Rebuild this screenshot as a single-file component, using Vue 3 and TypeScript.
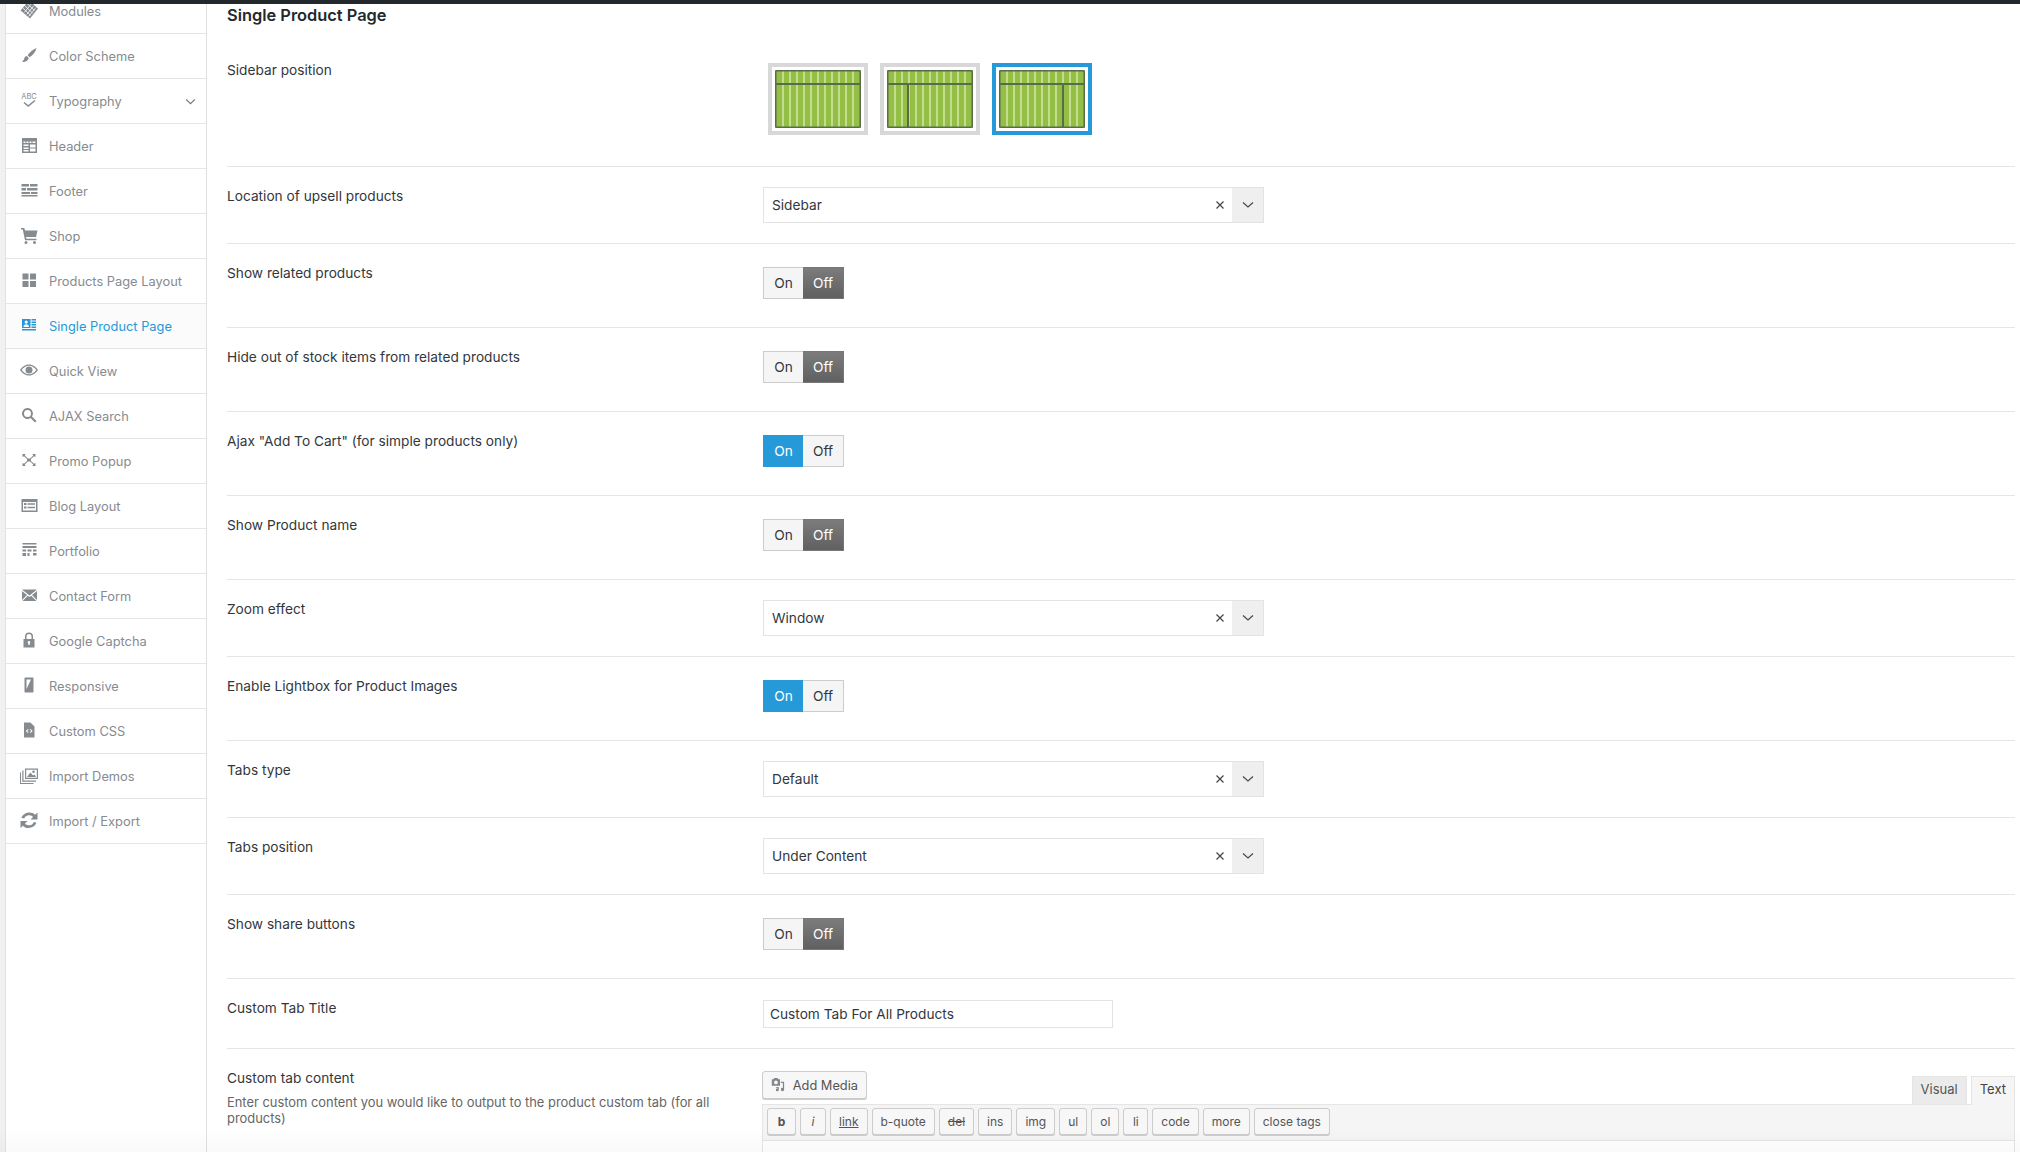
<script setup lang="ts">
interface NavItem {
  label: string;
  fill: string;
  line?: string;
  caret?: boolean;
  active?: boolean;
}

type Row =
  | { kind: "select"; label: string; value: string }
  | { kind: "toggle"; label: string; on: boolean };

const nav: NavItem[] = [
  { label: "Modules", fill: "M10 0.500 19 8.500 11 18.500 1.500 10.500Z", line: "M7.500 3 15.500 10.500M5.500 5.500 13.500 13M3.800 8l8 7.500M12.500 3.500 5.200 12.500M15 5.500l-7.300 9M17 7.500 9.700 16.500" },
  { label: "Color Scheme", fill: "M17.500 3C14.500 4.200 10.800 7 8.600 10.200l2 2C14 10.200 16.700 6.500 17.500 3ZM7.700 11C5.500 11.300 5.500 13 5 14.500L3 16.800C5.800 17.300 9 16 9.800 13Z" },
  { label: "Typography", fill: "", line: "M5 12.500 9.200 16 16 10.500", caret: true },
  { label: "Header", fill: "M3 3h15v15H3ZM4.500 6.500V8h2V6.500ZM7.500 6.500V8h2V6.500ZM10.500 6.500V8h2V6.500ZM13.500 6.500V8h3V6.500ZM4.500 9.500V11h5V9.500ZM4.500 12.500V14h5v-1.500ZM4.500 15v1.500h5V15ZM11 9.500v3h5.500v-3ZM11 13.500v3h5.500v-3Z" },
  { label: "Footer", fill: "M2.500 4H10v2.500H2.500ZM11 4h7.500v2.500H11ZM2.500 8H7v2.500H2.500ZM8 8h10.500v2.500H8ZM2.500 12H11v2H2.500ZM12 12h6.500v2H12ZM2.500 15h16v1.500h-16Z" },
  { label: "Shop", fill: "M2 3h3.300L6 5.500h12.500L17 12H7l.5 1.700h10v1.500H6L3.800 4.500H2ZM7 16a1.500 1.500 0 1 1 0 3 1.500 1.500 0 0 1 0-3ZM15.500 16a1.500 1.500 0 1 1 0 3 1.500 1.500 0 0 1 0-3Z" },
  { label: "Products Page Layout", fill: "M3.500 3.500h6v6h-6ZM11 3.500h6v6h-6ZM3.500 11h6v6h-6ZM11 11h6v6h-6Z" },
  { label: "Single Product Page", active: true, fill: "M3 4h8.500v9H3ZM7.200 5.500a1.600 1.600 0 1 0 0 3.200 1.600 1.600 0 0 0 0-3.200ZM4.500 12h5.500c0-2-1.200-2.800-2.800-2.800S4.500 10 4.500 12ZM12.500 4H17v1.500h-4.500ZM12.500 6.500H17V8h-4.500ZM12.500 9H17v1.500h-4.500ZM12.500 11.500H17V13h-4.500ZM3 14h14v1.500H3Z" },
  { label: "Quick View", fill: "M10 4.500c4 0 7.200 2.600 9 5.500-1.800 2.900-5 5.500-9 5.500S2.800 12.900 1 10c1.800-2.900 5-5.500 9-5.500ZM10 5.800C7 5.800 4.500 7.600 2.700 10 4.500 12.400 7 14.200 10 14.200s5.500-1.800 7.300-4.200C15.500 7.600 13 5.800 10 5.800ZM10 6.500a3.500 3.500 0 1 1 0 7 3.500 3.500 0 0 1 0-7Z" },
  { label: "AJAX Search", fill: "M8.500 3a5.500 5.500 0 0 1 4.500 8.600l4.500 4.500-1.500 1.500-4.500-4.500A5.500 5.500 0 1 1 8.500 3ZM8.500 5a3.500 3.500 0 1 0 0 7 3.500 3.500 0 0 0 0-7Z" },
  { label: "Promo Popup", fill: "M3.500 4h3L5.800 5.500 8.800 8.500h2.400l3-3L13.500 4h3v3L15 6.300 12 9v2l3 2.700 1.500-.7v3h-3l.7-1.500-3-3H8.800l-3 3 .7 1.500h-3v-3l1.500.7L8 11V9L5 6.300 3.500 7Z" },
  { label: "Blog Layout", fill: "M2.500 4h16v13h-16ZM4 7v8.500h13V7ZM5 8h2.500v2H5ZM8.500 8.200H16v1.500H8.500ZM5 11.500h2.500v2H5ZM8.500 11.700H16v1.500H8.500Z" },
  { label: "Portfolio", fill: "M3.500 3h14v1.500h-14ZM3.500 6h14v2h-14ZM3.500 9.500H7v2H3.500ZM8.500 9.500h4v2h-4ZM14 9.500h3.500v2H14ZM3.500 13H7v3H3.500ZM8.500 13h2v3h-2ZM14 13h3.500v2.500H14Z" },
  { label: "Contact Form", fill: "M3 4.500h15L10.500 10.500ZM3 6l5 4-5 5ZM18 6v9l-5-5ZM8.800 10.800 10.500 12l1.700-1.200 5.300 5.200h-14Z" },
  { label: "Google Captcha", fill: "M10 2.500a4 4 0 0 1 4 4V9h1.500v8.500h-11V9H6V6.500a4 4 0 0 1 4-4ZM10 4a2.500 2.500 0 0 0-2.500 2.500V9h5V6.500A2.500 2.500 0 0 0 10 4ZM10 11a1.300 1.300 0 0 0-.7 2.400V15h1.400v-1.600A1.300 1.300 0 0 0 10 11Z" },
  { label: "Responsive", fill: "M6.500 2.500h7c.6 0 1 .4 1 1v13c0 .6-.4 1-1 1h-7c-.6 0-1-.4-1-1v-13c0-.6.4-1 1-1ZM7.500 4.500v9.500l4.500-9.500Z" },
  { label: "Custom CSS", fill: "M5 2.500h6.500L15.500 6.500v11H5ZM9 9 6.800 11 9 13l.7-.7L8.200 11l1.500-1.300ZM11.500 9l-.7.7 1.500 1.300-1.500 1.300.7.700 2.200-2Z" },
  { label: "Import Demos", fill: "M6 3.500h13v10.500H6ZM7.200 4.700v8.100h10.600V4.700ZM14.500 5.500a1.300 1.300 0 1 1 0 2.600 1.300 1.300 0 0 1 0-2.600ZM8 12l3.500-4.500 2.500 3 1.500-1 1.500 2.500ZM4.500 5.500v10h12.500v1.200H3.300V5.500ZM2 7.500v10.500h12.500v1H1V7.500Z" },
  { label: "Import / Export", fill: "M10.500 2.500c2.200 0 4.200.9 5.600 2.300L18.500 2.500v7h-7l2.500-2.500A5.200 5.200 0 0 0 5.200 8.500L2.500 7.700C3.600 4.700 6.800 2.500 10.500 2.500ZM1.500 11h7l-2.500 2.500a5.200 5.200 0 0 0 8.800-1.500l2.700.8C16.400 15.800 13.200 18 9.500 18c-2.200 0-4.200-.9-5.600-2.300L1.500 18Z" },
];

const rows: Row[] = [
  { kind: "select", label: "Location of upsell products", value: "Sidebar" },
  { kind: "toggle", label: "Show related products", on: false },
  { kind: "toggle", label: "Hide out of stock items from related products", on: false },
  { kind: "toggle", label: 'Ajax "Add To Cart" (for simple products only)', on: true },
  { kind: "toggle", label: "Show Product name", on: false },
  { kind: "select", label: "Zoom effect", value: "Window" },
  { kind: "toggle", label: "Enable Lightbox for Product Images", on: true },
  { kind: "select", label: "Tabs type", value: "Default" },
  { kind: "select", label: "Tabs position", value: "Under Content" },
  { kind: "toggle", label: "Show share buttons", on: false },
];

const layouts = [
  { split: 0, selected: false },
  { split: 21, selected: false },
  { split: 64, selected: true },
];

const stripes = [7, 14, 21, 28, 35, 42, 49, 56, 63, 70, 77];

const tools = ["b", "i", "link", "b-quote", "del", "ins", "img", "ul", "ol", "li", "code", "more", "close tags"];
</script>

<template>
  <div class="page">
    <div class="topbar" />
    <div class="shell">
      <nav class="sidebar">
        <ul class="menu">
          <li v-for="item in nav" :key="item.label" class="menu-item" :class="{ active: item.active }">
            <svg class="menu-icon" viewBox="0 0 20 20" width="20" height="20">
              <text v-if="item.label === 'Typography'" x="10" y="8.500" class="abc">ABC</text>
              <path v-if="item.fill" :d="item.fill" fill="currentColor" fill-rule="evenodd" />
              <path
                v-if="item.line"
                :d="item.line"
                fill="none"
                :stroke="item.label === 'Modules' ? '#fff' : 'currentColor'"
                :stroke-width="item.label === 'Modules' ? 0.8 : 1.6"
              />
            </svg>
            <span class="menu-label">{{ item.label }}</span>
            <svg v-if="item.caret" class="caret" viewBox="0 0 12 8" width="11" height="7">
              <path d="M1 1.500 6 6.500 11 1.500" fill="none" stroke="#72777c" stroke-width="1.400" />
            </svg>
          </li>
        </ul>
      </nav>

      <main class="content">
        <h2 class="title">Single Product Page</h2>

        <section class="row">
          <div class="label label-first">Sidebar position</div>
          <div class="layouts">
            <div v-for="l in layouts" :key="l.split" class="layout" :class="{ selected: l.selected }">
              <svg viewBox="0 0 86 58" width="86" height="58">
                <rect x="0" y="0" width="86" height="58" fill="#93bf45" />
                <rect v-for="s in stripes" :key="s" :x="s" y="0" width="2" height="58" fill="#c3dc8d" />
                <path d="M0 14H86" stroke="#5a6b4b" stroke-width="2" />
                <path v-if="l.split" :d="`M${l.split} 14V58`" stroke="#5a6b4b" stroke-width="2" />
                <rect x="0.750" y="0.750" width="84.500" height="56.500" rx="1" fill="none" stroke="#5a6b4b" stroke-width="1.500" />
              </svg>
            </div>
          </div>
        </section>

        <section v-for="row in rows" :key="row.label" class="row">
          <div class="label">{{ row.label }}</div>
          <div v-if="row.kind === 'select'" class="select">
            <span class="select-value">{{ row.value }}</span>
            <svg class="select-clear" viewBox="0 0 10 10" width="10" height="10">
              <path d="M1.500 1.500 8.500 8.500M8.500 1.500 1.500 8.500" stroke="#444" stroke-width="1.200" />
            </svg>
            <span class="select-arrow">
              <svg viewBox="0 0 12 8" width="12" height="8">
                <path d="M1 1.500 6 6 11 1.500" fill="none" stroke="#444" stroke-width="1.100" />
              </svg>
            </span>
          </div>
          <div v-else class="toggle">
            <span class="toggle-on" :class="{ lit: row.on }">On</span>
            <span class="toggle-off" :class="{ dark: !row.on }">Off</span>
          </div>
        </section>

        <section class="row">
          <div class="label">Custom Tab Title</div>
          <div class="text-input">Custom Tab For All Products</div>
        </section>

        <section class="row row-last">
          <div class="label">
            Custom tab content
            <p class="desc">Enter custom content you would like to output to the product custom tab (for all products)</p>
          </div>
          <div class="editor">
            <div class="editor-head">
              <button class="media-btn">
                <svg viewBox="0 0 18 18" width="18" height="18">
                  <path
                    d="M1 2h2l1-1.500h4L9 2h2v8H1ZM6 3.500a2.300 2.300 0 1 0 0 4.600 2.300 2.300 0 0 0 0-4.600ZM12 5h4v9.500a2 2 0 1 1-1.500-1.900V6.500H12ZM6 11.500h3.500V15a1.800 1.800 0 1 1-1.500-1.800v-.7H6Z"
                    fill="#82878c"
                    fill-rule="evenodd"
                  />
                </svg>
                Add Media
              </button>
              <div class="tabs">
                <span class="tab">Visual</span>
                <span class="tab tab-active">Text</span>
              </div>
            </div>
            <div class="toolbar">
              <button v-for="t in tools" :key="t" class="tool" :class="`tool-${t.replace(' ', '-')}`">{{ t }}</button>
            </div>
            <div class="editor-body" />
          </div>
        </section>
      </main>
    </div>
    <div class="fade" />
  </div>
</template>

<style>
html,
body {
  margin: 0;
  background: #fff;
}
</style>

<style scoped>
.page {
  position: relative;
  width: 2020px;
  height: 1152px;
  overflow: hidden;
  font-family: Inter, "Liberation Sans", sans-serif;
  font-size: 13.7px;
  color: #32373c;
}

.topbar {
  height: 4px;
  background: #23282d;
}

.shell {
  display: flex;
  height: 1148px;
  overflow: hidden;
}

.sidebar {
  flex: none;
  width: 207px;
  box-sizing: border-box;
  background: #fff;
  border-left: 5px solid #f1f1f1;
  border-right: 1px solid #e0e0e0;
  box-shadow: inset 1px 0 0 #e2e2e2;
}

.menu {
  list-style: none;
  margin: -15px 0 0;
  padding: 0;
}

.menu-item {
  display: flex;
  align-items: center;
  height: 44px;
  padding: 0 10px 0 14px;
  border-bottom: 1px solid #e5e5e5;
  font-size: 12.85px;
  color: #868b90;
  margin-left: 1px;
}

.menu-item.active {
  color: #2599d8;
  background: #fbfbfb;
}

.menu-icon {
  flex: none;
  margin: -3px 10px 0 -1px;
}

.abc {
  font-size: 7.500px;
  text-anchor: middle;
  fill: currentColor;
}

.menu-label {
  flex: 1;
  white-space: nowrap;
}

.content {
  flex: 1;
  padding: 0 5px 0 20px;
  min-width: 0;
}

.title {
  margin: 0;
  height: 36px;
  font-size: 16.4px;
  line-height: 23px;
  font-weight: 600;
  color: #23282d;
}

.row {
  display: flex;
  padding: 20px 0;
  border-bottom: 1px solid #e5e5e5;
}

.row-last {
  border-bottom: 0;
}

.label {
  flex: none;
  width: 536px;
  line-height: 19px;
}

.label-first {
  line-height: 21px;
}

.desc {
  width: 500px;
  margin: 7px 0 0;
  font-size: 12.9px;
  line-height: 16px;
  color: #666;
}

.layouts {
  display: flex;
  gap: 12px;
  margin: 3px 0 11px 5px;
}

.layout {
  display: flex;
  padding: 3px;
  border: 4px solid #d8d8d8;
  background: #fff;
}

.layout.selected {
  border-color: #269ad8;
}

.select {
  display: flex;
  align-items: center;
  box-sizing: border-box;
  width: 501px;
  height: 36px;
  padding-left: 8px;
  border: 1px solid #e3e3e3;
  background: #fff;
}

.select-value {
  flex: 1;
}

.select-clear {
  margin-right: 7px;
}

.select-arrow {
  display: flex;
  align-items: center;
  justify-content: center;
  width: 31px;
  height: 100%;
  background: #efefef;
}

.toggle {
  display: flex;
  box-sizing: border-box;
  height: 32px;
  margin: 3px 0 8px;
  line-height: 30px;
  text-align: center;
}

.toggle-on,
.toggle-off {
  box-sizing: border-box;
  height: 32px;
  border: 1px solid #ccc;
  background: #f5f5f5;
}

.toggle-on {
  width: 40px;
  border-right: 0;
}

.toggle-off {
  width: 41px;
  border-left: 0;
}

.toggle-on.lit {
  background: #269ad8;
  border-color: #269ad8;
  color: #fff;
}

.toggle-off.dark {
  background: linear-gradient(#7c7c7c, #606060);
  border-color: #777;
  color: #fff;
}

.text-input {
  box-sizing: border-box;
  width: 350px;
  height: 28px;
  margin-top: 1px;
  padding-left: 6px;
  line-height: 26px;
  border: 1px solid #e3e3e3;
}

.editor {
  flex: 1;
  min-width: 0;
  margin: 3px 0 0 -1px;
}

.editor-head {
  display: flex;
  justify-content: space-between;
  align-items: flex-end;
  height: 32px;
}

.media-btn {
  display: flex;
  align-items: center;
  gap: 7px;
  box-sizing: border-box;
  width: 105px;
  height: 28px;
  margin-bottom: 5px;
  padding: 0 8px;
  font: inherit;
  font-size: 12.8px;
  white-space: nowrap;
  color: #555;
  background: #f7f7f7;
  border: 1px solid #ccc;
  border-radius: 3px;
  box-shadow: 0 1px 0 #ccc;
}

.tabs {
  display: flex;
  gap: 4px;
}

.tab {
  box-sizing: border-box;
  height: 28px;
  padding: 0 8px;
  line-height: 24px;
  font-size: 13px;
  color: #555;
  background: #ebebeb;
  border: 1px solid #e5e5e5;
  border-bottom: 0;
}

.tab-active {
  height: 29px;
  margin-bottom: -1px;
  color: #444;
  background: #f5f5f5;
  position: relative;
}

.toolbar {
  display: flex;
  gap: 4px;
  box-sizing: border-box;
  height: 37px;
  padding: 3px 4px;
  border: 1px solid #e5e5e5;
  background: #f5f5f5;
}

.tool {
  box-sizing: border-box;
  height: 27px;
  padding: 0 8px;
  min-width: 25px;
  font: inherit;
  font-size: 12px;
  color: #555;
  background: #f7f7f7;
  border: 1px solid #ccc;
  border-radius: 3px;
  box-shadow: 0 1px 0 #ccc;
}

.tool-b {
  width: 29px;
  font-weight: 700;
}

.tool-i {
  width: 26px;
  font-style: italic;
}

.tool-link {
  text-decoration: underline;
}

.tool-del {
  text-decoration: line-through;
}

.editor-body {
  height: 40px;
  border-left: 1px solid #e5e5e5;
  border-right: 1px solid #e5e5e5;
}

.fade {
  position: absolute;
  left: 0;
  right: 0;
  bottom: 0;
  height: 24px;
  background: linear-gradient(rgba(0, 0, 0, 0), rgba(0, 0, 0, 0.025));
  pointer-events: none;
}
</style>
